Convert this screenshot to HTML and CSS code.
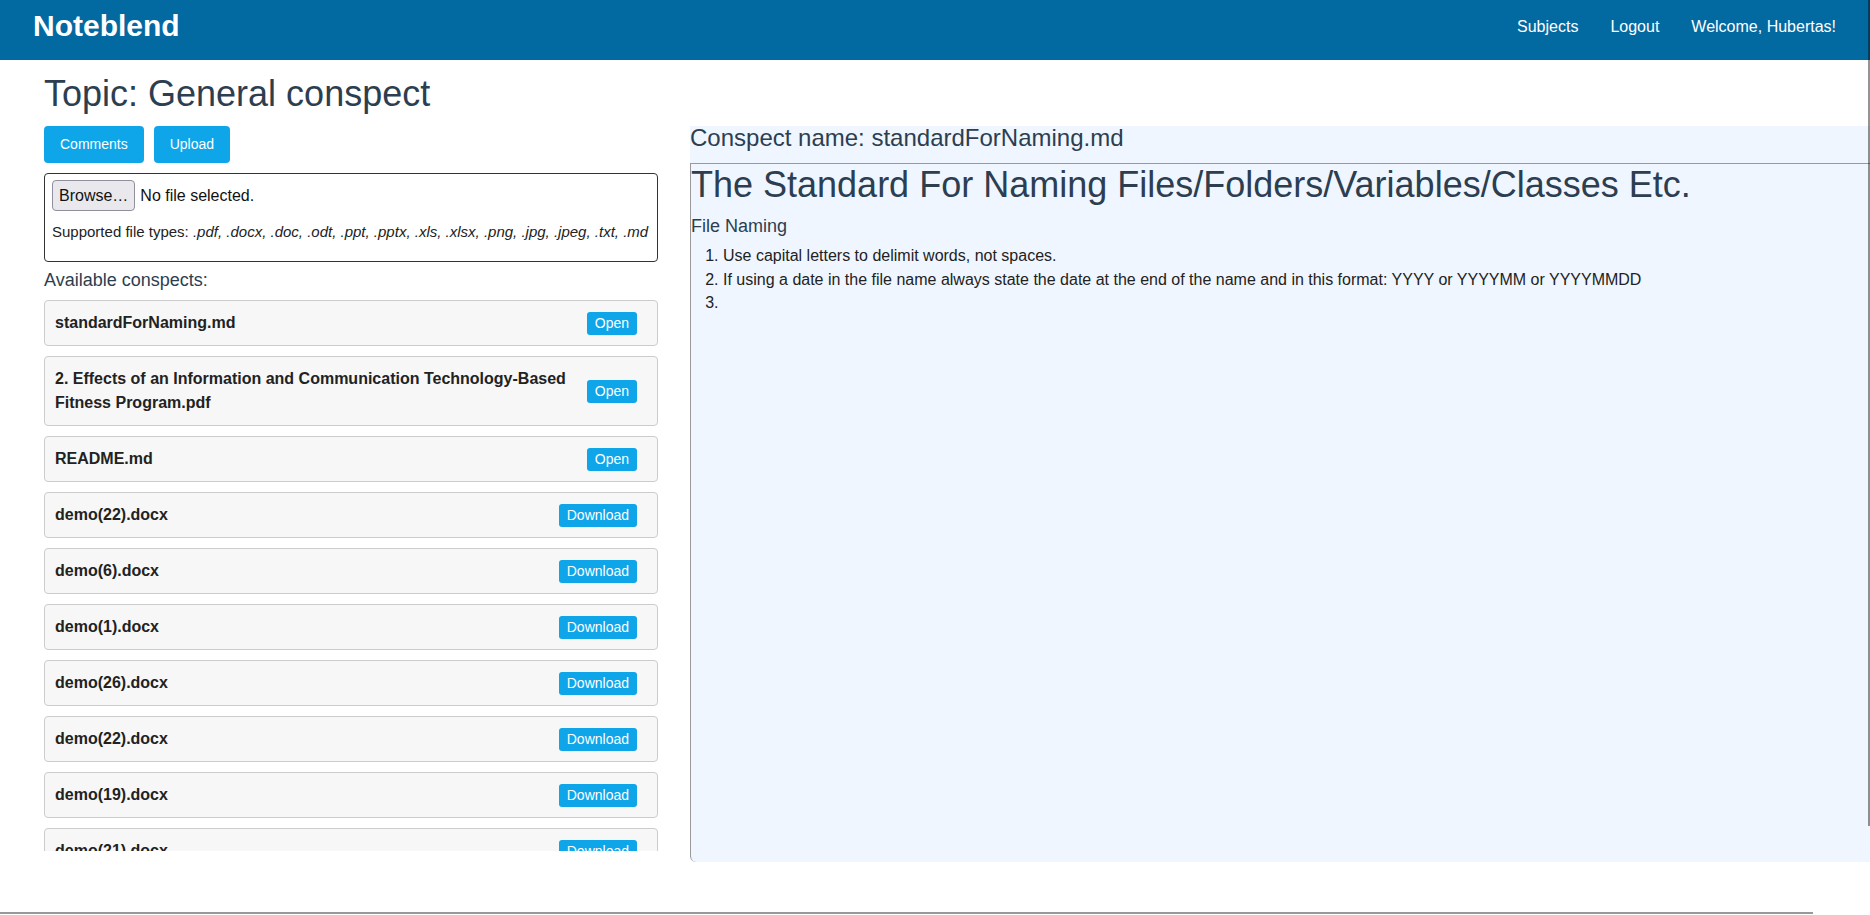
FILE: index.html
```html
<!DOCTYPE html>
<html lang="en">
<head>
<meta charset="utf-8">
<title>Noteblend</title>
<link rel="stylesheet" href="styles.css">
</head>
<body>
<header class="navbar">
  <a class="brand" href="#">Noteblend</a>
  <nav class="nav">
    <a href="#">Subjects</a>
    <a href="#">Logout</a>
    <span>Welcome, Hubertas!</span>
  </nav>
</header>
<main class="page">
  <h1 class="topic">Topic: General conspect</h1>
  <div class="columns">
    <section class="left">
      <div class="actions">
        <button class="btn">Comments</button>
        <button class="btn">Upload</button>
      </div>
      <div class="upload-box">
        <div class="file-row">
          <span class="browse">Browse…</span>
          <span class="nofile">No file selected.</span>
        </div>
        <p class="types">Supported file types: <em>.pdf, .docx, .doc, .odt, .ppt, .pptx, .xls, .xlsx, .png, .jpg, .jpeg, .txt, .md</em></p>
      </div>
      <div class="avail">Available conspects:</div>
      <div class="list">
        <div class="card"><div class="name">standardForNaming.md</div><button class="small">Open</button></div>
        <div class="card"><div class="name">2. Effects of an Information and Communication Technology-Based Fitness Program.pdf</div><button class="small">Open</button></div>
        <div class="card"><div class="name">README.md</div><button class="small">Open</button></div>
        <div class="card"><div class="name">demo(22).docx</div><button class="small">Download</button></div>
        <div class="card"><div class="name">demo(6).docx</div><button class="small">Download</button></div>
        <div class="card"><div class="name">demo(1).docx</div><button class="small">Download</button></div>
        <div class="card"><div class="name">demo(26).docx</div><button class="small">Download</button></div>
        <div class="card"><div class="name">demo(22).docx</div><button class="small">Download</button></div>
        <div class="card"><div class="name">demo(19).docx</div><button class="small">Download</button></div>
        <div class="card"><div class="name">demo(21).docx</div><button class="small">Download</button></div>
        <div class="card"><div class="name">demo(3).docx</div><button class="small">Download</button></div>
      </div>
    </section>
    <section class="right">
      <h2 class="cname">Conspect name: standardForNaming.md</h2>
      <div class="doc">
        <h1 class="doc-title">The Standard For Naming Files/Folders/Variables/Classes Etc.</h1>
        <p class="doc-sub">File Naming</p>
        <ol class="doc-list">
          <li>Use capital letters to delimit words, not spaces.</li>
          <li>If using a date in the file name always state the date at the end of the name and in this format: YYYY or YYYYMM or YYYYMMDD</li>
          <li></li>
        </ol>
      </div>
    </section>
  </div>
</main>
<div class="vscroll"></div>
<div class="hscroll"></div>
</body>
</html>
```

FILE: styles.css
```css
html, body {
  margin: 0;
  padding: 0;
  overflow: hidden;
  height: 915px;
  background: #ffffff;
  font-family: "Liberation Sans", Arial, Helvetica, sans-serif;
  color: #222222;
}

.navbar {
  height: 60px;
  background: #0369a1;
  display: flex;
  align-items: center;
  justify-content: space-between;
  padding: 0 34px 0 33px;
}

.brand {
  color: #ffffff;
  font-weight: bold;
  font-size: 30px;
  text-decoration: none;
  line-height: 30px;
  margin-top: -9px;
}

.nav {
  display: flex;
  gap: 32px;
  font-size: 16px;
  margin-top: -7px;
}

.nav a, .nav span {
  color: #ffffff;
  text-decoration: none;
}

.page {
  padding-left: 44px;
}

.topic {
  margin: 12px 0 11px;
  font-size: 36px;
  line-height: 43px;
  font-weight: normal;
  color: #2c3e50;
}

.columns {
  display: flex;
  align-items: flex-start;
}

.left {
  width: 614px;
  flex-shrink: 0;
}

.actions {
  display: flex;
  gap: 10px;
}

.btn {
  background: #0ea5e9;
  color: #ffffff;
  border: none;
  border-radius: 4px;
  font-family: inherit;
  font-size: 14px;
  line-height: 21px;
  padding: 8px 16px;
}

.upload-box {
  margin-top: 10px;
  border: 1px solid #333333;
  border-radius: 4px;
  padding: 6px 7px 7px;
  height: 89px;
  box-sizing: border-box;
}

.file-row {
  display: flex;
  align-items: center;
  gap: 5px;
  font-size: 16px;
  color: #111111;
}

.browse {
  background: #e9e9ed;
  border: 1px solid #8f8f9d;
  border-radius: 4px;
  padding: 5px 6px;
  line-height: 19px;
}

.types {
  margin: 9px 0 0;
  font-size: 15px;
  line-height: 23px;
  color: #222222;
}

.avail {
  margin-top: 5px;
  font-size: 18px;
  line-height: 27px;
  color: #2c3e50;
}

.list {
  margin-top: 6px;
  height: 551px;
  overflow: hidden;
}

.card {
  display: flex;
  align-items: center;
  background: #f7f7f7;
  border: 1px solid #cccccc;
  border-radius: 4px;
  padding: 10px 20px 10px 10px;
  margin-bottom: 10px;
}

.name {
  flex: 1;
  font-weight: bold;
  font-size: 16px;
  line-height: 24px;
  color: #222222;
  padding-right: 10px;
}

.small {
  background: #0ea5e9;
  color: #ffffff;
  border: none;
  border-radius: 3px;
  font-family: inherit;
  font-size: 14px;
  line-height: 23px;
  height: 23px;
  padding: 0 8px;
}

.right {
  margin-left: 32px;
  width: 1240px;
  flex-shrink: 0;
  height: 736px;
  background: #eff6ff;
  border-bottom-left-radius: 6px;
  display: flex;
  flex-direction: column;
}

.cname {
  margin: 0 0 13px;
  font-size: 24px;
  line-height: 24px;
  font-weight: normal;
  color: #2c3e50;
}

.doc {
  flex: 1;
  border-top: 1px solid #999999;
  border-left: 1px solid #999999;
  border-bottom-left-radius: 6px;
}

.doc-title {
  margin: -1px 0 7px;
  font-size: 36px;
  line-height: 43px;
  font-weight: normal;
  color: #2c3e50;
}

.doc-sub {
  margin: 0 0 4px;
  font-size: 18px;
  line-height: 27px;
  color: #2c3e50;
}

.doc-list {
  margin: 0;
  padding-left: 32px;
  font-size: 16px;
  line-height: 23.5px;
  color: #222222;
}

.doc-list li {
  min-height: 23.5px;
}

.vscroll {
  position: fixed;
  right: 0;
  top: 0;
  width: 2px;
  height: 826px;
  background: rgba(0, 0, 0, 0.42);
}

.hscroll {
  position: fixed;
  left: 0;
  bottom: 1px;
  width: 1813px;
  height: 2px;
  background: rgba(0, 0, 0, 0.4);
}
```
